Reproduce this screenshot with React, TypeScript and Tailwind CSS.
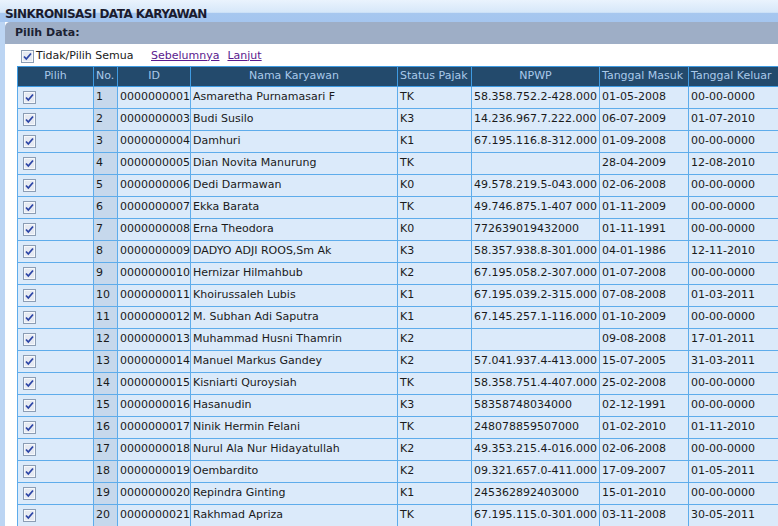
import React from 'react';

type Row = {
    no: number;
    id: string;
    nama: string;
    status: string;
    npwp: string;
    masuk: string;
    keluar: string;
};

const rows: Row[] = [
    { no: 1, id: '0000000001', nama: 'Asmaretha Purnamasari F', status: 'TK', npwp: '58.358.752.2-428.000', masuk: '01-05-2008', keluar: '00-00-0000' },
    { no: 2, id: '0000000003', nama: 'Budi Susilo', status: 'K3', npwp: '14.236.967.7.222.000', masuk: '06-07-2009', keluar: '01-07-2010' },
    { no: 3, id: '0000000004', nama: 'Damhuri', status: 'K1', npwp: '67.195.116.8-312.000', masuk: '01-09-2008', keluar: '00-00-0000' },
    { no: 4, id: '0000000005', nama: 'Dian Novita Manurung', status: 'TK', npwp: '', masuk: '28-04-2009', keluar: '12-08-2010' },
    { no: 5, id: '0000000006', nama: 'Dedi Darmawan', status: 'K0', npwp: '49.578.219.5-043.000', masuk: '02-06-2008', keluar: '00-00-0000' },
    { no: 6, id: '0000000007', nama: 'Ekka Barata', status: 'TK', npwp: '49.746.875.1-407 000', masuk: '01-11-2009', keluar: '00-00-0000' },
    { no: 7, id: '0000000008', nama: 'Erna Theodora', status: 'K0', npwp: '772639019432000', masuk: '01-11-1991', keluar: '00-00-0000' },
    { no: 8, id: '0000000009', nama: 'DADYO ADJI ROOS,Sm Ak', status: 'K3', npwp: '58.357.938.8-301.000', masuk: '04-01-1986', keluar: '12-11-2010' },
    { no: 9, id: '0000000010', nama: 'Hernizar Hilmahbub', status: 'K2', npwp: '67.195.058.2-307.000', masuk: '01-07-2008', keluar: '00-00-0000' },
    { no: 10, id: '0000000011', nama: 'Khoirussaleh Lubis', status: 'K1', npwp: '67.195.039.2-315.000', masuk: '07-08-2008', keluar: '01-03-2011' },
    { no: 11, id: '0000000012', nama: 'M. Subhan Adi Saputra', status: 'K1', npwp: '67.145.257.1-116.000', masuk: '01-10-2009', keluar: '00-00-0000' },
    { no: 12, id: '0000000013', nama: 'Muhammad Husni Thamrin', status: 'K2', npwp: '', masuk: '09-08-2008', keluar: '17-01-2011' },
    { no: 13, id: '0000000014', nama: 'Manuel Markus Gandey', status: 'K2', npwp: '57.041.937.4-413.000', masuk: '15-07-2005', keluar: '31-03-2011' },
    { no: 14, id: '0000000015', nama: 'Kisniarti Quroysiah', status: 'TK', npwp: '58.358.751.4-407.000', masuk: '25-02-2008', keluar: '00-00-0000' },
    { no: 15, id: '0000000016', nama: 'Hasanudin', status: 'K3', npwp: '58358748034000', masuk: '02-12-1991', keluar: '00-00-0000' },
    { no: 16, id: '0000000017', nama: 'Ninik Hermin Felani', status: 'TK', npwp: '248078859507000', masuk: '01-02-2010', keluar: '01-11-2010' },
    { no: 17, id: '0000000018', nama: 'Nurul Ala Nur Hidayatullah', status: 'K2', npwp: '49.353.215.4-016.000', masuk: '02-06-2008', keluar: '00-00-0000' },
    { no: 18, id: '0000000019', nama: 'Oembardito', status: 'K2', npwp: '09.321.657.0-411.000', masuk: '17-09-2007', keluar: '01-05-2011' },
    { no: 19, id: '0000000020', nama: 'Repindra Ginting', status: 'K1', npwp: '245362892403000', masuk: '15-01-2010', keluar: '00-00-0000' },
    { no: 20, id: '0000000021', nama: 'Rakhmad Apriza', status: 'TK', npwp: '67.195.115.0-301.000', masuk: '03-11-2008', keluar: '30-05-2011' },
];

// old-style checked checkbox
function Check() {
    return (
        <svg width="13" height="13" viewBox="0 0 13 13" className="block">
            <rect x="0.5" y="0.5" width="12" height="12" fill="#e6eaf2" stroke="#8c9db4" />
            <rect x="1.5" y="1.5" width="10" height="10" fill="none" stroke="#f6f8fb" />
            <path d="M3 6.5 L5.3 9 L10 3.5" fill="none" stroke="#2c45a6" strokeWidth="1.8" />
        </svg>
    );
}

const th = 'border border-[#3f9be2] px-[2px] font-normal text-[#a9c9ea] whitespace-nowrap overflow-hidden';
const td = 'border border-[#5eaceb] px-[2px] whitespace-nowrap overflow-hidden';

export default function App() {
    return (
        <div className="w-[778px] h-[526px] overflow-hidden bg-[#bcd5f3] text-[11px] text-[#1a1a1a] font-['DejaVu_Sans',Verdana,sans-serif]">
            <div className="h-[22px] bg-[linear-gradient(to_bottom,#eaf3fd_0%,#d6e7f9_56%,#a7c7ef_60%,#a4c5ef_100%)] pl-[5px] pt-[7px]">
                <h1 className="font-bold text-[12px] leading-[14px] tracking-[-0.55px] text-[#1b1b2e]">SINKRONISASI DATA KARYAWAN</h1>
            </div>

            <div className="ml-[5px] h-[504px] bg-white overflow-hidden">
                <div className="h-[22px] bg-[#9eaec6] rounded-tl-[5px] pl-[10px] flex items-center">
                    <span className="font-bold text-[#1c2233]">Pilih Data:</span>
                </div>

                <div className="pt-[4px] pl-[16px] flex items-center h-[20px]">
                    <div className="w-[130px] flex items-center gap-[2px]">
                        <Check />
                        <span>Tidak/Pilih Semua</span>
                    </div>
                    <a href="#" className="underline text-[#5a1a8e]">Sebelumnya</a>
                    <a href="#" className="underline text-[#5a1a8e] ml-[8px]">Lanjut</a>
                </div>

                <table className="ml-[12px] mt-[2px] border-collapse table-fixed w-[763px]">
                    <colgroup>
                        <col className="w-[76px]" />
                        <col className="w-[24px]" />
                        <col className="w-[73px]" />
                        <col className="w-[207px]" />
                        <col className="w-[74px]" />
                        <col className="w-[128px]" />
                        <col className="w-[89px]" />
                        <col className="w-[92px]" />
                    </colgroup>
                    <thead>
                        <tr className="h-[20px] bg-[#234a6c]">
                            <th className={`${th} text-center`}>Pilih</th>
                            <th className={`${th} text-left`}>No.</th>
                            <th className={`${th} text-center`}>ID</th>
                            <th className={`${th} text-center`}>Nama Karyawan</th>
                            <th className={`${th} text-left`}>Status Pajak</th>
                            <th className={`${th} text-center`}>NPWP</th>
                            <th className={`${th} text-left`}>Tanggal Masuk</th>
                            <th className={`${th} text-left`}>Tanggal Keluar</th>
                        </tr>
                    </thead>
                    <tbody>
                        {rows.map((r) => (
                            <tr key={r.no} className="h-[22px] bg-[#dbeafa]">
                                <td className={`${td} pl-[5px]`}>
                                    <Check />
                                </td>
                                <td className={`${td} bg-[#c6d8ec]`}>{r.no}</td>
                                <td className={td}>{r.id}</td>
                                <td className={td}>{r.nama}</td>
                                <td className={td}>{r.status}</td>
                                <td className={td}>{r.npwp}</td>
                                <td className={td}>{r.masuk}</td>
                                <td className={td}>{r.keluar}</td>
                            </tr>
                        ))}
                    </tbody>
                </table>
            </div>
        </div>
    );
}
